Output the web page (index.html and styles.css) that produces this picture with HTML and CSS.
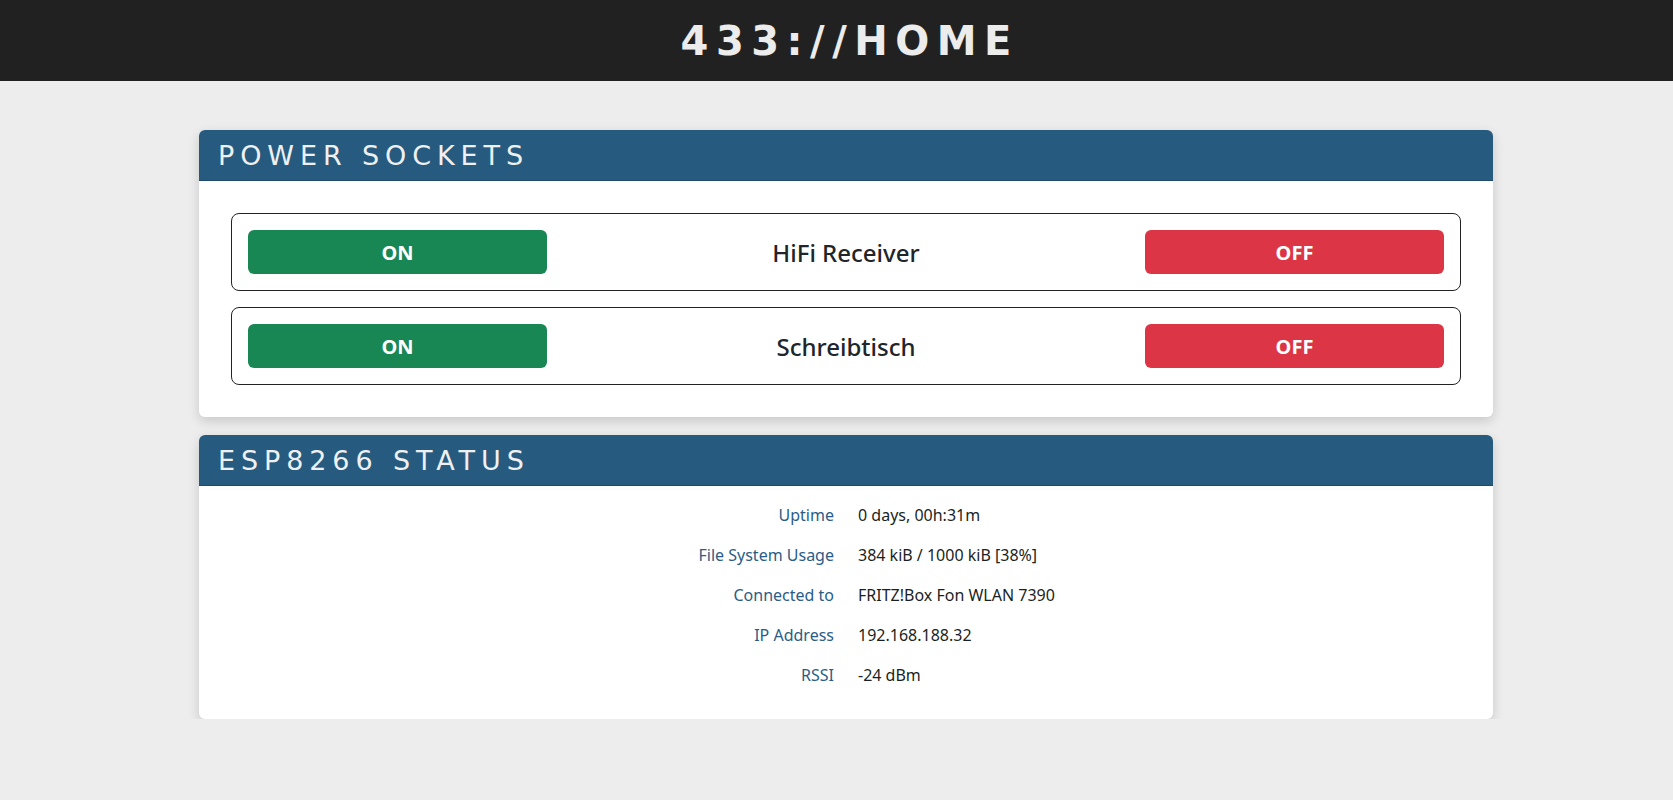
FILE: index.html
```html
<!DOCTYPE html>
<html lang="de">
<head>
<meta charset="utf-8">
<title>433://HOME</title>
<link rel="stylesheet" href="styles.css">
</head>
<body>
<header class="topbar">
  <h1 class="brand">433://HOME</h1>
</header>
<main class="container">
  <section class="card">
    <h2 class="card-header">Power Sockets</h2>
    <div class="card-body sockets">
      <div class="socket">
        <button class="btn btn-on">ON</button>
        <div class="socket-name">HiFi Receiver</div>
        <button class="btn btn-off">OFF</button>
      </div>
      <div class="socket">
        <button class="btn btn-on">ON</button>
        <div class="socket-name">Schreibtisch</div>
        <button class="btn btn-off">OFF</button>
      </div>
    </div>
  </section>
  <section class="card">
    <h2 class="card-header">ESP8266 Status</h2>
    <div class="card-body status">
      <dl class="status-table">
        <dt>Uptime</dt><dd>0 days, 00h:31m</dd>
        <dt>File System Usage</dt><dd>384 kiB / 1000 kiB [38%]</dd>
        <dt>Connected to</dt><dd>FRITZ!Box Fon WLAN 7390</dd>
        <dt>IP Address</dt><dd>192.168.188.32</dd>
        <dt>RSSI</dt><dd>-24 dBm</dd>
      </dl>
    </div>
  </section>
</main>
</body>
</html>
```
FILE: styles.css
```css
* { box-sizing: border-box; }
html, body { margin: 0; padding: 0; }
body {
  background: #ededed;
  font-family: "Noto Sans", "Open Sans", sans-serif;
  color: #212529;
  font-size: 16px;
}
.topbar {
  background: #212121;
  height: 81px;
  padding-left: 19px;
  display: flex;
  align-items: center;
  justify-content: center;
}
.brand {
  margin: 0;
  font-family: "DejaVu Sans", sans-serif;
  font-weight: 700;
  font-size: 40px;
  letter-spacing: 7.5px;
  padding-left: 7.5px;
  color: #ececec;
  line-height: 1;
}
.container {
  margin: 49px 180px 0 199px;
  display: flex;
  flex-direction: column;
  gap: 18px;
}
.card {
  background: #fff;
  border-radius: 6px;
  box-shadow: 0 4px 12px rgba(0,0,0,0.16);
  overflow: hidden;
}
.card-header {
  margin: 0;
  height: 51px;
  background: #265a7e;
  border-bottom: 1px solid #1f4a69;
  color: #eef0f2;
  font-family: "DejaVu Sans", sans-serif;
  font-weight: 400;
  font-size: 27px;
  letter-spacing: 5.9px;
  text-transform: uppercase;
  padding-left: 19px;
  display: flex;
  align-items: center;
}
.sockets {
  padding: 32px;
  display: flex;
  flex-direction: column;
  gap: 16px;
}
.socket {
  border: 1px solid #222;
  border-radius: 8px;
  padding: 16px;
  display: grid;
  grid-template-columns: 1fr 2fr 1fr;
  align-items: center;
}
.btn {
  height: 44px;
  border: none;
  border-radius: 6px;
  color: #fff;
  font-family: "Noto Sans", sans-serif;
  font-weight: 700;
  font-size: 20px;
  padding: 0;
}
.btn-on { background: #198754; }
.btn-off { background: #dc3545; }
.socket-name {
  text-align: center;
  font-size: 24px;
  font-weight: 500;
  color: #212529;
}
.status { padding: 9px 8px 24px; }
.status-table {
  margin: 0;
  display: grid;
  grid-template-columns: 1fr 1fr;
}
.status-table dt, .status-table dd {
  margin: 0;
  padding: 8px 12px;
  line-height: 24px;
  font-size: 16px;
}
.status-table dt {
  text-align: right;
  color: #2a5d86;
}
.status-table dd { color: #1b1f23; }
```
